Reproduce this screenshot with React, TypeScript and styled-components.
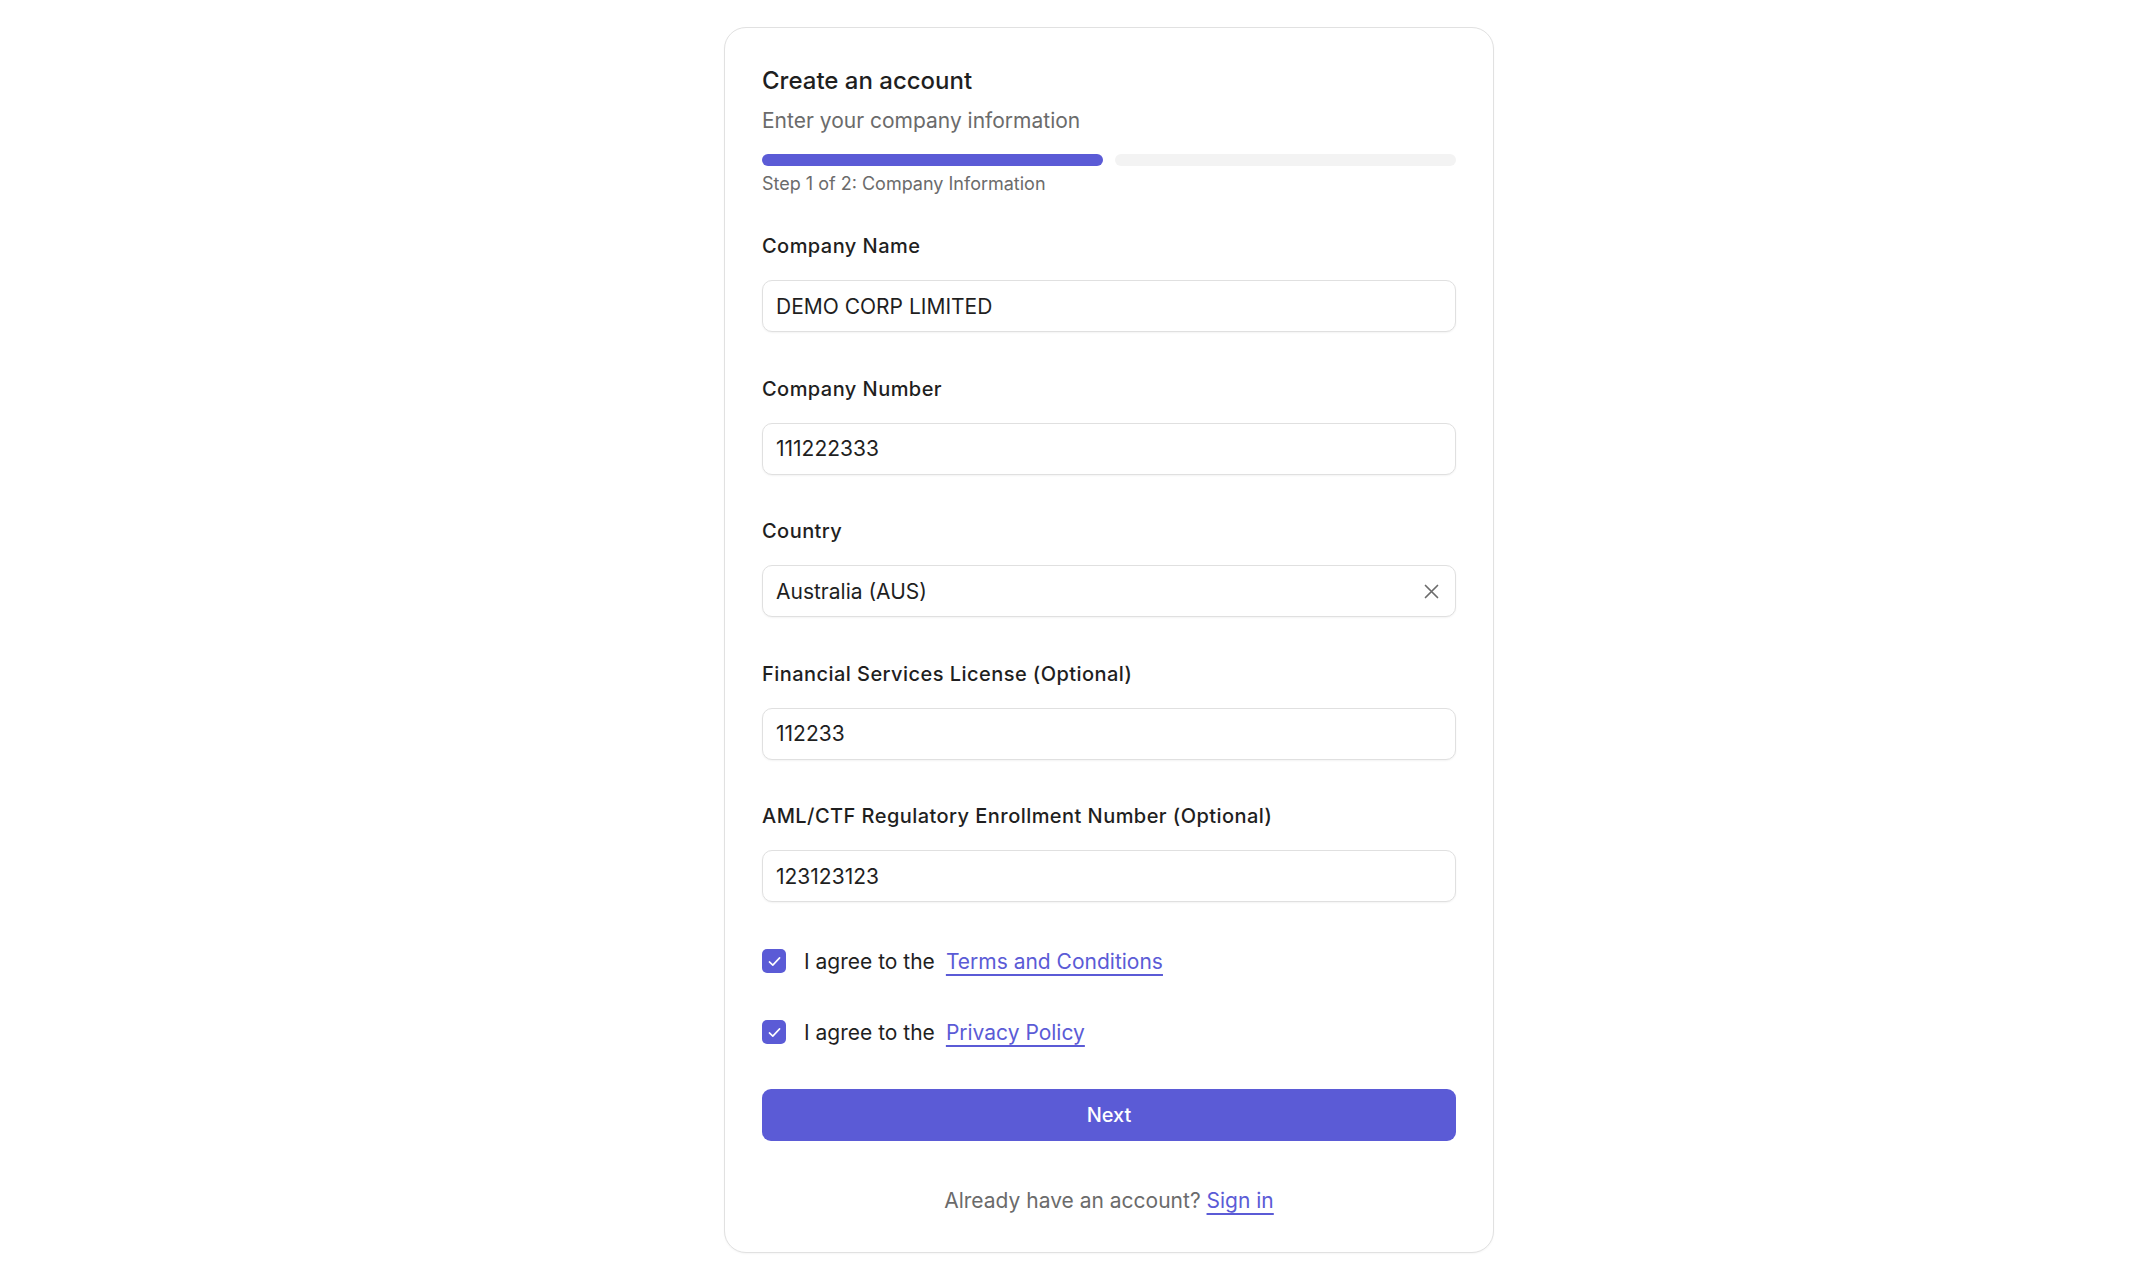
import React from "react";
import styled, { createGlobalStyle } from "styled-components";

const GlobalStyle = createGlobalStyle`
  *, *::before, *::after { box-sizing: border-box; }
  html, body { margin: 0; padding: 0; background: #ffffff; }
  body {
    font-family: Inter, "Noto Sans", "Liberation Sans", sans-serif;
    color: #202020;
    -webkit-font-smoothing: antialiased;
  }
`;

const ACCENT = "#5b5bd6";
const MUTED = "#6b6b6b";
const TEXT = "#1f1f1f";

const Page = styled.main`
  min-height: 100vh;
  display: flex;
  justify-content: center;
  align-items: flex-start;
  padding: 27px 0 0 84px;
`;

const Card = styled.section`
  width: 770px;
  background: #ffffff;
  border: 1px solid #e1e1e1;
  border-radius: 22px;
  padding: 37px;
  box-shadow: 0 1px 2px rgba(0, 0, 0, 0.04);
`;

const Title = styled.h1`
  margin: 0;
  font-size: 24px;
  line-height: 32px;
  font-weight: 500;
  color: ${TEXT};
`;

const Subtitle = styled.p`
  margin: 10px 0 0;
  font-size: 21px;
  line-height: 28px;
  color: ${MUTED};
`;

const Progress = styled.div`
  margin-top: 19px;
  display: grid;
  grid-template-columns: 1fr 1fr;
  gap: 12px;
`;

const Segment = styled.div<{ $active?: boolean }>`
  height: 12px;
  border-radius: 6px;
  background: ${(p) => (p.$active ? ACCENT : "#f3f3f3")};
`;

const StepText = styled.p`
  margin: 6px 0 0;
  font-size: 18px;
  line-height: 24px;
  color: ${MUTED};
`;

const Form = styled.form`
  margin-top: 37px;
  display: flex;
  flex-direction: column;
`;

const Field = styled.div`
  display: flex;
  flex-direction: column;
  & + & {
    margin-top: 43.5px;
  }
`;

const Label = styled.label`
  font-size: 20px;
  line-height: 26px;
  font-weight: 500;
  letter-spacing: 0.45px;
  color: ${TEXT};
  margin-bottom: 21px;
`;

const Input = styled.input`
  height: 52px;
  width: 100%;
  border: 1px solid #e0e0e0;
  border-radius: 10px;
  padding: 0 13px;
  font-family: inherit;
  font-size: 21px;
  color: ${TEXT};
  background: #ffffff;
  box-shadow: 0 1px 2px rgba(0, 0, 0, 0.05);
  outline: none;
`;

const SelectBox = styled.div`
  height: 52px;
  display: flex;
  align-items: center;
  justify-content: space-between;
  border: 1px solid #e0e0e0;
  border-radius: 10px;
  padding: 0 16px 0 13px;
  font-size: 21px;
  color: ${TEXT};
  background: #ffffff;
  box-shadow: 0 1px 2px rgba(0, 0, 0, 0.05);
`;

const ClearButton = styled.button`
  border: none;
  background: none;
  padding: 0;
  display: flex;
  align-items: center;
  justify-content: center;
  color: #6b6b6b;
  cursor: pointer;
`;

const Agreements = styled.div`
  margin-top: 43px;
  display: flex;
  flex-direction: column;
  gap: 39px;
`;

const AgreeRow = styled.div`
  height: 32px;
  display: flex;
  align-items: center;
  font-size: 21px;
  color: ${TEXT};
`;

const CheckBox = styled.span`
  width: 24px;
  height: 24px;
  border-radius: 5px;
  background: ${ACCENT};
  display: inline-flex;
  align-items: center;
  justify-content: center;
  margin-right: 18px;
  flex-shrink: 0;
`;

const TextLink = styled.a<{ $gap?: number }>`
  color: ${ACCENT};
  text-decoration: underline;
  text-decoration-thickness: 2px;
  text-underline-offset: 5px;
  margin-left: ${(p) => p.$gap ?? 0}px;
  cursor: pointer;
`;

const NextButton = styled.button`
  margin-top: 41px;
  height: 52px;
  width: 100%;
  border: none;
  border-radius: 9px;
  background: ${ACCENT};
  color: #ffffff;
  font-family: inherit;
  font-size: 20px;
  font-weight: 500;
  cursor: pointer;
`;

const Footer = styled.p`
  margin: 46px 0 0;
  text-align: center;
  font-size: 21px;
  line-height: 28px;
  color: ${MUTED};
`;

const CheckIcon = () => (
  <svg width="17" height="17" viewBox="0 0 16 16" fill="none">
    <path
      d="M3.2 8.4 L6.4 11.4 L12.8 4.6"
      stroke="#ffffff"
      strokeWidth="1.5"
      strokeLinecap="round"
      strokeLinejoin="round"
    />
  </svg>
);

const CrossIcon = () => (
  <svg width="15" height="15" viewBox="0 0 15 15" fill="none">
    <path
      d="M1.5 1.5 L13.5 13.5 M13.5 1.5 L1.5 13.5"
      stroke="currentColor"
      strokeWidth="1.7"
      strokeLinecap="round"
    />
  </svg>
);

const fields = [
  { label: "Company Name", value: "DEMO CORP LIMITED" },
  { label: "Company Number", value: "111222333" },
  { label: "Country", value: "Australia (AUS)", select: true },
  { label: "Financial Services License (Optional)", value: "112233" },
  { label: "AML/CTF Regulatory Enrollment Number (Optional)", value: "123123123" },
];

export default function App() {
  return (
    <>
      <GlobalStyle />
      <Page>
        <Card>
          <Title>Create an account</Title>
          <Subtitle>Enter your company information</Subtitle>
          <Progress>
            <Segment $active />
            <Segment />
          </Progress>
          <StepText>Step 1 of 2: Company Information</StepText>
          <Form onSubmit={(e) => e.preventDefault()}>
            {fields.map((f) => (
              <Field key={f.label}>
                <Label>{f.label}</Label>
                {f.select ? (
                  <SelectBox>
                    <span>{f.value}</span>
                    <ClearButton type="button" aria-label="Clear">
                      <CrossIcon />
                    </ClearButton>
                  </SelectBox>
                ) : (
                  <Input defaultValue={f.value} />
                )}
              </Field>
            ))}
            <Agreements>
              <AgreeRow>
                <CheckBox role="checkbox" aria-checked="true">
                  <CheckIcon />
                </CheckBox>
                <span>I agree to the</span>
                <TextLink $gap={11}>Terms and Conditions</TextLink>
              </AgreeRow>
              <AgreeRow>
                <CheckBox role="checkbox" aria-checked="true">
                  <CheckIcon />
                </CheckBox>
                <span>I agree to the</span>
                <TextLink $gap={11}>Privacy Policy</TextLink>
              </AgreeRow>
            </Agreements>
            <NextButton type="submit">Next</NextButton>
          </Form>
          <Footer>
            Already have an account? <TextLink>Sign in</TextLink>
          </Footer>
        </Card>
      </Page>
    </>
  );
}
